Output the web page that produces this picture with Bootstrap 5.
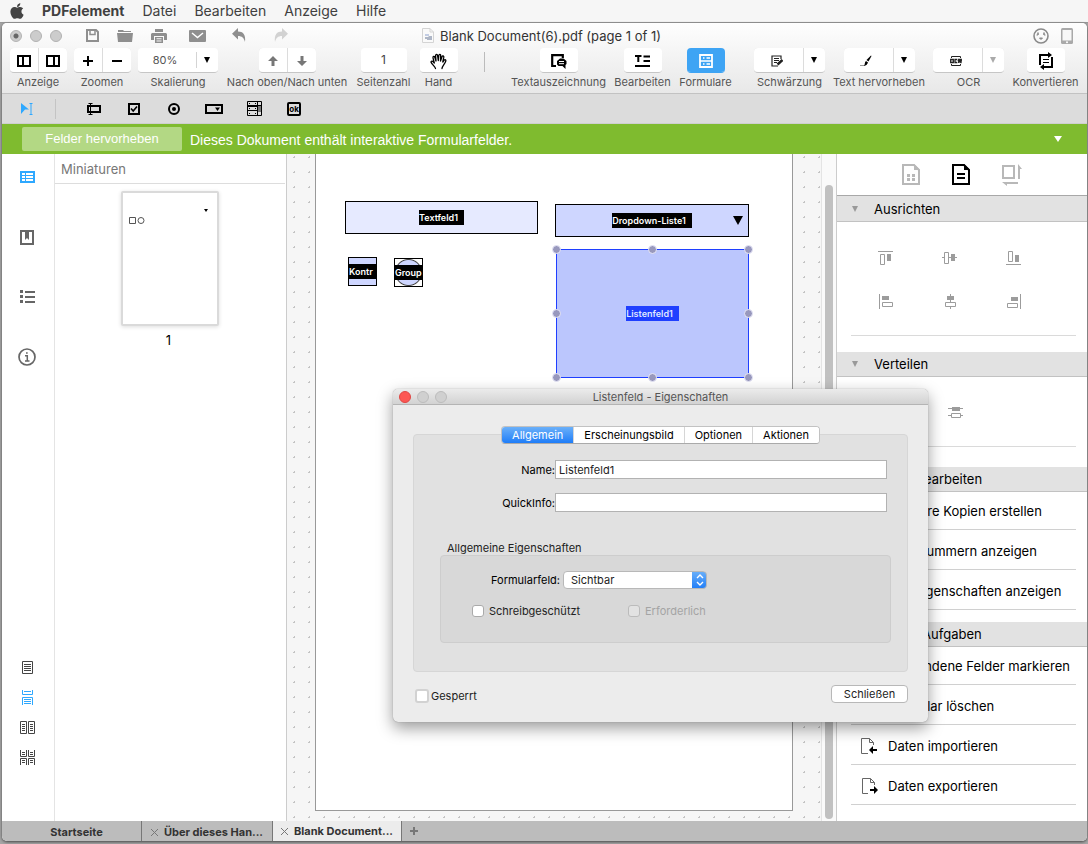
<!DOCTYPE html>
<html lang="de">
<head>
<meta charset="utf-8">
<meta name="viewport" content="width=device-width, initial-scale=1">
<title>PDFelement</title>
<link href="https://cdn.jsdelivr.net/npm/bootstrap@5.3.0/dist/css/bootstrap.min.css" rel="stylesheet">
<style>
  body { font-family: Inter, "Liberation Sans", sans-serif; font-size: 13px; line-height: 16px; color: #000; background: #a6a6a6; }
  svg { display: block; flex: none; }
  button { font: inherit; }
  .plain { background: none; border: 0; padding: 0; color: inherit; }

  /* system menu bar */
  .sysbar { height: 23px; background: #f6f6f6; border-bottom: 1px solid #999; color: #404040; font-size: 14px; padding: 0 10px; gap: 18px; }
  .sysbar a { color: inherit; text-decoration: none; }

  /* application window */
  .app-window { margin: 0 1px 3px 2px; border-radius: 5px; overflow: hidden; background: #fff; box-shadow: 0 1px 3px #444; }
  .app-head { background: linear-gradient(#fefefe, #e8e8e8); border-bottom: 1px solid #c2c2c2; height: 71px; }
  .title-row { display: grid; grid-template-columns: 1fr auto 1fr; height: 25px; padding: 0 14px 0 8px; }
  .light { width: 12px; height: 12px; border-radius: 50%; background: #ccc; border: 1px solid #b2b2b2; }
  .light-dot { background: radial-gradient(circle, #666 0 2px, #ccc 3px); }
  .quick { color: #8f8f8f; margin-left: 24px; gap: 18px; }
  .doc-title { color: #333; gap: 6px; }

  .tool-row { display: grid; grid-template-columns: 56px 56px 80px 122px 55px 39px 1fr 95px 57px 53px 6px 71px 92px 71px 67px; column-gap: 8px; padding: 0 8px; }
  .tool { display: flex; flex-direction: column; align-items: center; gap: 2px; white-space: nowrap; font-size: 11px; line-height: 14px; color: #555; }
  .tool-box { display: flex; height: 25px; gap: 1px; background: #dcdcdc; border-radius: 4px; overflow: hidden; border-bottom: 1px solid #c6c6c6; }
  .tool-box button { background: #fff; border: 0; padding: 2px 0 0; width: 28px; color: #000; display: flex; align-items: center; justify-content: center; }
  .tool-box .wide { width: 49px; padding-right: 4px; }
  .tool-box .drop { width: 21px; padding: 0 1px 0 0; }
  .tool-box .single { width: 38px; }
  .tool-box.on, .tool-box.on button { background: #3ea4f4; color: #fff; border-color: #3ea4f4; }
  .tool-box input { width: 46px; border: 0; text-align: center; background: #fff; color: #444; font-size: 12px; padding: 0; }
  .scale-pick { width: 80px; border: 0; appearance: none; color: #555; font-size: 11px; padding: 0 26px 0 0;
    background: #fff url("data:image/svg+xml,%3Csvg xmlns='http://www.w3.org/2000/svg' width='22' height='16'%3E%3Cpath d='M.5 0v16' stroke='%23d4d4d4'/%3E%3Cpath d='M8 5h6l-3 6z'/%3E%3C/svg%3E") no-repeat right center; }
  .rule-v { width: 1px; height: 20px; background: #bbb; }

  .form-tools { height: 30px; background: #dcdcdc; border-bottom: 1px solid #cfcfcf; padding-left: 5px; }
  .form-tools button { width: 40px; height: 28px; display: flex; align-items: center; justify-content: center; }
  .form-tools .rule-v { margin: 0 18px 0 8px; background: #c4c4c4; }

  .notice { height: 30px; background: #7fbb2f; color: #fff; font-family: "Liberation Sans", sans-serif; font-size: 14px; padding: 0 25px 0 20px; gap: 8px; }
  .notice .hilite { width: 160px; height: 24px; background: #b3d884; border-radius: 2px; color: #fff; font-size: 13px; }
  .notice span { padding-top: 2px; }

  /* navigation rail and thumbnails */
  .rail { flex: 0 0 53px; border-right: 1px solid #e4e4e4; padding: 0 2px 55px 0; color: #666; }
  .rail button { height: 60px; display: flex; align-items: center; justify-content: center; }
  .rail .view-modes { color: #444; }
  .rail .view-modes button { height: 30px; }
  .rail .cur { color: #2ea8ff; }
  .thumbs { flex: 0 0 232px; border-right: 1px solid #ccc; color: #000; padding-right: 1px; }
  .thumbs h2 { font-size: 13px; line-height: 16px; font-weight: 400; color: #777; margin: 0; padding: 7px 0 6px 6px; border-bottom: 1px solid #ddd; }
  .thumb-page { width: 98px; height: 135px; margin: 7px auto 6px; border: 2px solid #dadada; border-radius: 2px; background: #fff; box-shadow: 0 1px 4px #ddd; }
  .thumb-no { padding-right: 3px; text-align: center; }
  .thumb-page { position: relative; right: auto; }

  /* document canvas */
  .canvas { background: #f6f6f6 radial-gradient(circle, #c4c4c4 1px, transparent 1px) 0 -4px / 15px 15px; padding: 0 28px 10px; }
  .sheet { position: relative; background: #fff; border: 1px solid #999; border-top: 0; }
  .field { position: absolute; display: flex; align-items: center; justify-content: center; border: 1px solid #000; background: #ced6ff; font-size: 9px; line-height: 15px; font-weight: 600; color: #fff; height: 33px; }
  .field span { background: #000; padding-right: 6px; }
  .f-text { left: 29px; top: 47px; width: 193px; background: #e6eaff; }
  .f-drop { left: 239px; top: 50px; width: 194px; }
  .f-drop svg { position: absolute; right: 5px; top: 11px; }
  .f-check { left: 32px; top: 103px; width: 29px; height: 29px; }
  .f-radio { left: 78px; top: 104px; width: 29px; height: 29px; background: radial-gradient(circle, #ced6ff 0 12px, #444 13px, #fff 14px); }
  .f-check span, .f-radio span { flex: 1; padding: 0; height: 15px; }
  .f-list { left: 240px; top: 95px; width: 193px; height: 129px; background: #bbc6fd; border-color: #1f3fff; }
  .f-list span { background: #1f3fff; color: #dfe6ff; }
  .knob { position: absolute; width: 9px; height: 9px; margin: -5px; border-radius: 50%; background: #9898bd; border: 1px solid #e8e8f8; }
  .k-l { left: 0; } .k-c { left: 50%; } .k-r { left: 100%; margin-left: -4px; }
  .k-t { top: 0; } .k-m { top: 50%; } .k-b { top: 100%; margin-top: -4px; }
  .track { flex: 0 0 16px; background: #fafafa; border-left: 1px solid #e4e4e4; border-right: 1px solid #ccc; padding: 31px 3px 2px; }
  .track div { background: #c1c1c1; border-radius: 4px; }

  /* task panel */
  .side { flex: 0 0 250px; }
  .side-tabs { height: 42px; border-bottom: 1px solid #a8a8a8; gap: 32px; color: #b8b8b8; margin-bottom: 1px; }
  .side h3 { display: flex; align-items: center; gap: 16px; font-size: 13px; line-height: 16px; font-weight: 400; margin: 0; height: 25px; padding: 0 15px; background: #e2e2e2; border-bottom: 1px solid #c2c2c2; }
  .side-tabs + h3 { margin-top: -1px; padding-top: 1px; height: 26px; }
  .side-body { margin: 0 11px 16px 14px; border-bottom: 1px solid #dadada; color: #9c9c9c; }
  .align-grid { display: grid; grid-template-columns: repeat(3, 64px); grid-auto-rows: 44px; padding: 13px 0 12px 2px; }
  .align-grid button { display: flex; align-items: center; justify-content: center; }
  .tasks { list-style: none; margin: 0 11px 12px 14px; padding: 0; }
  .tasks li { border-bottom: 1px solid #d0d0d0; }
  .tasks button { display: flex; align-items: center; gap: 10px; width: 100%; height: 39px; padding: 3px 0 0 9px; white-space: nowrap; }
  .tasks li:first-child button { height: 37px; padding-top: 0; }
  .tasks svg { width: 18px; }

  /* document tabs */
  .doc-tabs { height: 20px; background: #bcbcbc; color: #333; font-size: 11px; font-weight: 700; }
  .doc-tabs a { color: inherit; text-decoration: none; border-right: 1px solid #777; display: flex; align-items: center; justify-content: center; gap: 6px; white-space: nowrap; padding-top: 2px; }
  .doc-tabs .t1 { width: 140px; padding-left: 10px; } .doc-tabs .t2 { width: 131px; } .doc-tabs .t3 { width: 129px; background: #ececec; padding-top: 0; }

  /* properties dialog */
  .dlg { position: absolute; left: 393px; top: 389px; width: 535px; background: #ececec; border-radius: 5px; box-shadow: 0 0 1px #777, 0 6px 16px rgba(0,0,0,.4); font-size: 11px; line-height: 14px; color: #222; }
  .dlg-title { height: 16px; border-bottom: 1px solid #b4b4b4; border-radius: 5px 5px 0 0; background: linear-gradient(#ebebeb, #d2d2d2); display: grid; grid-template-columns: 60px 1fr 60px; color: #555; padding: 0 6px; }
  .dlg-title .light { background: #d0d0d0; border-color: #bcbcbc; padding: 0; }
  .dlg-title .light-red { background: #fc5753; border-color: #df4744; }
  .dlg-body { padding: 29px 20px 19px; }
  .pane { border: 1px solid #d6d6d6; border-radius: 4px; background: #e1e1e1; padding: 0 16px 28px 26px; }
  .seg { margin: -9px 10px 16px 0; }
  .seg-in { display: flex; border: 1px solid #c2c2c2; border-bottom-color: #aaa; border-radius: 4px; overflow: hidden; background: #fff; }
  .seg-in button { border: 0; border-left: 1px solid #d6d6d6; background: #fff; height: 16px; padding: 0 10px; color: #000; line-height: 16px; }
  .seg-in button.on { background: linear-gradient(#6bb0f9, #1f7df8); color: #fff; border: 0; }
  .line-row { display: flex; align-items: center; }
  .line-row label { width: 115px; text-align: right; white-space: nowrap; color: #000; }
  .line-row input { flex: 1; min-width: 0; height: 19px; border: 1px solid #b2b2b2; background: #fff; padding: 0 3px; margin-right: 4px; color: #222; font-size: 11px; }
  .inner { border: 1px solid #cdcdcd; border-radius: 4px; background: #d8d8d8; padding: 15px 31px 25px; height: 88px; }
  .mac-pick { width: 144px; height: 18px; appearance: none; border: 1px solid #b8b8b8; border-radius: 4px; padding: 0 7px; color: #222; margin-left: 3px; font-size: 11px;
    background: #fff url("data:image/svg+xml,%3Csvg xmlns='http://www.w3.org/2000/svg' width='15' height='18'%3E%3Cdefs%3E%3ClinearGradient id='g' x2='0' y2='1'%3E%3Cstop stop-color='%236bb0f9'/%3E%3Cstop offset='1' stop-color='%231f7df8'/%3E%3C/linearGradient%3E%3C/defs%3E%3Cpath fill='url(%23g)' d='M0 0h15v18H0z'/%3E%3Cpath d='M5 7l3-3 3 3M5 11l3 3 3-3' fill='none' stroke='%23fff' stroke-width='1.4'/%3E%3C/svg%3E") no-repeat right center / 15px 18px border-box; }
  .tick { appearance: none; width: 12px; height: 12px; border: 1px solid #aaa; border-radius: 3px; background: #fff; margin: 0 5px 0 0; flex: none; }
  .tick:disabled { background: #e2e2e2; border-color: #bbb; }
  .tick-lg { width: 14px; height: 14px; border: 2px solid #d2d2d2; margin-right: 2px; }
  .push { width: 77px; height: 18px; border: 1px solid #b8b8b8; border-radius: 4px; background: #fff; color: #222; padding: 0; line-height: 14px; }
</style>
</head>
<body class="vh-100 d-flex flex-column overflow-hidden">

<nav class="sysbar d-flex align-items-center flex-shrink-0">
  <svg width="14" height="18" viewBox="0 0 384 512" fill="#444"><path d="M318.700 268.700c-.2-36.700 16.400-64.400 50-84.800-18.800-26.900-47.200-41.700-84.700-44.600-35.500-2.800-74.300 20.700-88.500 20.700-15 0-49.400-19.700-76.400-19.700C63.300 141.200 4 184.800 4 273.500q0 39.300 14.400 81.200c12.800 36.700 59 126.700 107.200 125.200 25.200-.6 43-17.900 75.800-17.900 31.800 0 48.300 17.900 76.400 17.900 48.600-.7 90.400-82.500 102.600-119.300-65.200-30.700-61.700-90-61.700-91.900zm-56.600-164.200c27.300-32.400 24.800-61.900 24-72.500-24.100 1.400-52 16.400-67.900 34.900-17.500 19.800-27.800 44.300-25.600 71.900 26.100 2 49.900-11.400 69.500-34.300z"/></svg>
  <a href="#" class="fw-bold">PDFelement</a>
  <a href="#">Datei</a>
  <a href="#">Bearbeiten</a>
  <a href="#">Anzeige</a>
  <a href="#">Hilfe</a>
</nav>

<div class="app-window d-flex flex-column flex-grow-1">
  <header class="app-head flex-shrink-0">
    <div class="title-row align-items-center">
      <div class="d-flex align-items-center">
        <div class="d-flex gap-2"><span class="light light-dot"></span><span class="light"></span><span class="light"></span></div>
        <div class="quick d-flex align-items-center">
          <button class="plain" aria-label="Speichern"><svg width="13" height="13" viewBox="0 0 13 13" fill="none" stroke="currentColor" stroke-width="2"><path d="M1 1h9l2 2v9H1z"/><path d="M4 1v4.500h5V1" stroke-width="1.500"/></svg></button>
          <button class="plain" aria-label="Öffnen"><svg width="16" height="13" viewBox="0 0 16 13" fill="currentColor"><path d="M1 3V1h5l1 1h7v1zM0 4h16l-1 9H1z"/></svg></button>
          <button class="plain" aria-label="Drucken"><svg width="16" height="14" viewBox="0 0 16 14" fill="currentColor"><path d="M4 0h8v3H4zM1 4h14l1 1v6h-3V7H3v4H0V5z"/><path d="M4 8h8v6H4z M5.500 9.300v1h5v-1z M5.500 11.600v1h5v-1z" fill-rule="evenodd"/></svg></button>
          <button class="plain ms-1" aria-label="E-Mail"><svg width="17" height="12" viewBox="0 0 17 12"><rect width="17" height="12" rx="1" fill="currentColor"/><path d="M3 3l5.500 4.500L14 3" fill="none" stroke="#fff" stroke-width="1.500"/></svg></button>
          <button class="plain ms-2" aria-label="Rückgängig"><svg width="15" height="15" viewBox="0 0 15 15" fill="currentColor"><path d="M6 0v3.500c5 0 8 3 7 10.500-1-4-3-6-7-6v3.500L0 5.800z"/></svg></button>
          <button class="plain ms-2" aria-label="Wiederholen"><svg width="15" height="15" viewBox="0 0 15 15" fill="#d2d2d2"><path d="M9 0v3.500c-5 0-8 3-7 10.500 1-4 3-6 7-6v3.500l6-5.700z"/></svg></button>
        </div>
      </div>
      <div class="doc-title d-flex align-items-center">
        <svg width="12" height="15" viewBox="0 0 12 15"><path d="M.5.500h7.500l3.500 3.500v10.500H.5z" fill="#fafafa" stroke="#d4d4d4"/><path d="M8 .5V4h3.500" fill="none" stroke="#d4d4d4"/><path d="M3 6h4v2H3z" fill="#c3cde4"/><path d="M3 9h3l1-1h3v4H5v-1H3z" fill="#aeb6c6"/></svg>
        <span>Blank Document(6).pdf (page 1 of 1)</span>
      </div>
      <div class="d-flex justify-content-end align-items-center" style="gap:12px">
        <button class="plain" aria-label="Feedback"><svg width="16" height="16" viewBox="0 0 16 16" fill="none" stroke="#8a8a8a"><circle cx="8" cy="8" r="7" stroke-width="1.600"/><path d="M5 4.500v2.500M11 4.500v2.500" stroke-width="1.600"/><path d="M3.500 7h1.500M11 7h1.500"/><path d="M6.500 10h3L8 11.500z" fill="#8a8a8a"/></svg></button>
        <button class="plain" aria-label="Mobilgerät"><svg width="12" height="16" viewBox="0 0 12 16"><rect width="12" height="16" rx="1.500" fill="#a9a9a9"/><path d="M1.500 2h9v10.500h-9z" fill="#f8f8f8"/><circle cx="6" cy="14.200" r="1" fill="#fff"/></svg></button>
      </div>
    </div>

    <div class="tool-row">
      <div class="tool">
        <div class="tool-box">
          <button aria-label="Linke Leiste"><svg width="14" height="12" viewBox="0 0 14 12" fill="none" stroke="currentColor" stroke-width="2"><path d="M1 1h12v10H1zM6 1v10"/></svg></button>
          <button aria-label="Rechte Leiste"><svg width="14" height="12" viewBox="0 0 14 12" fill="none" stroke="currentColor" stroke-width="2"><path d="M1 1h12v10H1zM8 1v10"/></svg></button>
        </div><span>Anzeige</span>
      </div>
      <div class="tool">
        <div class="tool-box">
          <button aria-label="Vergrößern"><svg width="10" height="10" stroke="currentColor" stroke-width="2"><path d="M5 0v10M0 5h10"/></svg></button>
          <button aria-label="Verkleinern"><svg width="10" height="10" stroke="currentColor" stroke-width="2"><path d="M0 5h10"/></svg></button>
        </div><span>Zoomen</span>
      </div>
      <div class="tool">
        <div class="tool-box"><select class="scale-pick text-center" id="scale" aria-label="Skalierung"><option>80%</option></select></div><label for="scale">Skalierung</label>
      </div>
      <div class="tool">
        <div class="tool-box">
          <button aria-label="Nach oben"><svg width="10" height="10" fill="#777"><path d="M5 0l5 5H6.500v5h-3V5H0z"/></svg></button>
          <button aria-label="Nach unten"><svg width="10" height="10" fill="#777"><path d="M5 10L0 5h3.500V0h3v5H10z"/></svg></button>
        </div><span>Nach oben/Nach unten</span>
      </div>
      <div class="tool">
        <div class="tool-box"><input id="pageno" value="1"></div><label for="pageno">Seitenzahl</label>
      </div>
      <div class="tool">
        <div class="tool-box"><button class="single" aria-label="Hand"><svg width="17" height="17" viewBox="0 0 17 17" fill="none" stroke="currentColor" stroke-width="1.300" stroke-linejoin="round" stroke-linecap="round"><path d="M5.500 15.500c0-1.500-4-4.500-4.500-6.500 0-1.200 1.500-1.300 2.300-.2L4.300 10 3 4.800c-.3-1.500 1.300-1.900 1.800-.5L6 8 5.600 2.800C5.500 1 7.400 1 7.600 2.600L8.300 7.500l.5-5c.2-1.500 2-1.400 1.900.2L10.500 8l1.500-4.300c.5-1.300 2-.8 1.800.5L12.800 9l1.400-1.800c.8-1 2-.3 1.600.9-.8 2.500-3.600 4.900-3.800 7.400"/></svg></button></div><span>Hand</span>
      </div>
      <div class="d-flex justify-content-center pt-1"><span class="rule-v"></span></div>
      <div class="tool">
        <div class="tool-box"><button class="single" aria-label="Textauszeichnung"><svg width="16" height="15" viewBox="0 0 16 15"><path d="M5 12H1.200V1.200h10.600V4" fill="none" stroke="currentColor" stroke-width="2.200"/><path d="M9 4.500h3.500l3 2.500v3l-1 1v4l-3-3H7.500L6 10.500V7z" fill="currentColor"/><path d="M8 7.500h5M8 9.700h5" stroke="#fff"/></svg></button></div><span>Textauszeichnung</span>
      </div>
      <div class="tool">
        <div class="tool-box"><button class="single" aria-label="Bearbeiten"><svg width="15" height="12" viewBox="0 0 15 12" stroke="currentColor" stroke-width="2"><path d="M0 1h6.500M3.300 1v6M8.500 1.500H15M8.500 6H15M0 11h15"/></svg></button></div><span>Bearbeiten</span>
      </div>
      <div class="tool">
        <div class="tool-box on"><button class="single" aria-label="Formulare"><svg width="14" height="14" viewBox="0 0 14 14" fill="none" stroke="currentColor"><path d="M1 1h12v12H1z" stroke-width="1.800"/><path d="M1 7h12M4 4h1.500M7.500 4h3.500M4 10h1.500M7.500 10h3.500" stroke-width="1.400"/></svg></button></div><span>Formulare</span>
      </div>
      <div></div>
      <div class="tool">
        <div class="tool-box">
          <button class="wide" aria-label="Schwärzung"><svg width="12" height="12" viewBox="0 0 12 12" fill="none" stroke="#222" stroke-width="1.200"><path d="M7 11H1V1h9v3M3 3.500h5M3 5.500h5M3 7.500h3"/><path d="M6.500 9.500l5-4.500" stroke-width="2.600"/></svg></button>
          <button class="drop" aria-label="Mehr"><svg width="6" height="6"><path d="M0 0h6L3 6z"/></svg></button>
        </div><span>Schwärzung</span>
      </div>
      <div class="tool">
        <div class="tool-box">
          <button class="wide" aria-label="Text hervorheben"><svg width="12" height="12" viewBox="0 0 12 12"><path d="M0 10.500h5" stroke="#999"/><path d="M11.500 1L8.500 6.500 6.500 5 11 .5z"/><path d="M6 6l2 1.500C7 10 6 10.500 4 11c1-1 .5-4 2-5z"/></svg></button>
          <button class="drop" aria-label="Mehr"><svg width="6" height="6"><path d="M0 0h6L3 6z"/></svg></button>
        </div><span>Text hervorheben</span>
      </div>
      <div class="tool">
        <div class="tool-box">
          <button class="wide" aria-label="OCR"><svg width="12" height="12" viewBox="0 0 12 12" fill="none" stroke="#222"><path d="M1.500 3V1.500h9V3M1.500 9v1.500h9V9"/><path d="M.7 4.500h2.600v3H.7zM7.300 4.500H5v3h2.300M8.700 8V4.500h2.600V6H9l2.500 2" stroke-width="1.300"/></svg></button>
          <button class="drop" aria-label="Mehr"><svg width="6" height="6" fill="#aaa"><path d="M0 0h6L3 6z"/></svg></button>
        </div><span>OCR</span>
      </div>
      <div class="tool">
        <div class="tool-box"><button class="single" aria-label="Konvertieren"><svg width="16" height="18" viewBox="0 0 16 18" fill="none" stroke="currentColor" stroke-width="2"><path d="M2 13V3h9M14 5v10H5"/><path d="M10 0l4 3-4 3zM6 12l-4 3 4 3z" fill="currentColor" stroke="none"/><path d="M5 7.500h6M5 10.500h6" stroke-width="1.200"/></svg></button></div><span>Konvertieren</span>
      </div>
    </div>
  </header>

  <div class="form-tools d-flex align-items-center flex-shrink-0">
    <button class="plain" aria-label="Auswahl"><svg width="12" height="12" viewBox="0 0 12 12"><path d="M0 0l8 6.500H4L0 11z" fill="#2ea8ff"/><path d="M8.500.500h3M8.500 11.500h3M10 .5v11" stroke="#2ea8ff"/></svg></button>
    <span class="rule-v"></span>
    <button class="plain" aria-label="Textfeld"><svg width="14" height="12" viewBox="0 0 14 12" fill="none" stroke="#000"><path d="M1 3h12v6H1z" stroke-width="2"/><path d="M1.500.500h4M1.500 11.500h4M3.500.500v11" stroke-width="1"/></svg></button>
    <button class="plain" aria-label="Kontrollkästchen"><svg width="12" height="12" viewBox="0 0 12 12" fill="none" stroke="#000"><path d="M1 1h10v10H1z" stroke-width="2"/><path d="M3 5.500l2.200 2.500L9 3.500" stroke-width="1.600"/></svg></button>
    <button class="plain" aria-label="Optionsfeld"><svg width="12" height="12" viewBox="0 0 12 12"><circle cx="6" cy="6" r="5" fill="none" stroke="#000" stroke-width="2"/><circle cx="6" cy="6" r="2"/></svg></button>
    <button class="plain" aria-label="Dropdown-Liste"><svg width="18" height="10" viewBox="0 0 18 10"><path d="M1 1h16v8H1z" fill="none" stroke="#000" stroke-width="2"/><path d="M10 3.500h5L12.500 7z"/></svg></button>
    <button class="plain" aria-label="Listenfeld"><svg width="15" height="15" viewBox="0 0 15 15" fill="none" stroke="#000"><path d="M.5.500h14v14H.5zM10.500 0v15M10 4.500h5M0 9.500h11"/><path d="M0 5h11" stroke-width="2"/><path d="M2 2.500h1M8 2.500h1M2 7.500h1M8 7.500h1M2 12.500h1M8 12.500h1"/><path d="M12.500 5v6" stroke="#777" stroke-width="3"/></svg></button>
    <button class="plain" aria-label="Schaltfläche"><svg width="14" height="14" viewBox="0 0 14 14"><rect x="1" y="1" width="12" height="12" rx="1" fill="none" stroke="#000" stroke-width="2"/><text x="7" y="10" text-anchor="middle" font-size="8" font-weight="700">ok</text></svg></button>
  </div>

  <div class="notice d-flex align-items-center flex-shrink-0">
    <button class="plain hilite">Felder hervorheben</button>
    <span>Dieses Dokument enthält interaktive Formularfelder.</span>
    <button class="plain ms-auto" aria-label="Einklappen"><svg width="8" height="6" fill="#fff"><path d="M0 0h8L4 6z"/></svg></button>
  </div>

  <main class="d-flex flex-grow-1" style="min-height:0">
    <nav class="rail d-flex flex-column justify-content-between">
      <div class="d-flex flex-column" style="margin-top:-7px">
        <button class="plain cur" aria-label="Miniaturen"><svg width="15" height="12" viewBox="0 0 15 12" fill="none" stroke="currentColor"><path d="M1 1h13v10H1z" stroke-width="2"/><path d="M1 4.500h13M1 7.500h13M5.500 1v10"/></svg></button>
        <button class="plain" aria-label="Lesezeichen"><svg width="14" height="15" viewBox="0 0 14 15"><path d="M1 1h12v13H1z" fill="none" stroke="currentColor" stroke-width="2"/><path d="M5 2h4v8L7 8l-2 2z" fill="currentColor"/></svg></button>
        <button class="plain" aria-label="Gliederung"><svg width="15" height="14" viewBox="0 0 15 14" stroke="currentColor" stroke-width="2"><path d="M5 2h10M5 7h10M5 12h10"/><path d="M0 1.500h3M0 6.500h3M0 11.500h3" stroke-width="3"/></svg></button>
        <button class="plain" aria-label="Info"><svg width="18" height="18" viewBox="0 0 18 18" fill="none" stroke="currentColor"><circle cx="9" cy="9" r="8" stroke-width="1.700"/><path d="M7 7.700h2.300V13M7 13h4.500M8 5h1.700" stroke-width="1.500"/></svg></button>
      </div>
      <div class="view-modes d-flex flex-column" style="margin-bottom:-6px">
        <button class="plain" aria-label="Einzelseite"><svg width="11" height="13" viewBox="0 0 11 13" fill="none" stroke="currentColor"><path d="M.5.500h10v12H.5zM2 3.500h7M2 5.500h7M2 7.500h7M2 9.500h7"/></svg></button>
        <button class="plain cur" aria-label="Fortlaufend"><svg width="11" height="15" viewBox="0 0 11 15" fill="none" stroke="currentColor"><path d="M.5 0v4.500h10V0M2 1.500h7M.5 15V7.500h10V15M2 9.500h7M2 11.500h7M2 13.500h7"/></svg></button>
        <button class="plain" aria-label="Doppelseite"><svg width="15" height="13" viewBox="0 0 15 13" fill="none" stroke="currentColor"><path d="M.5.500h6v12h-6zM8.500.500h6v12h-6zM2 3.500h3M2 5.500h3M2 7.500h3M2 9.500h3M10 3.500h3M10 5.500h3M10 7.500h3M10 9.500h3"/></svg></button>
        <button class="plain" aria-label="Doppelseite fortlaufend"><svg width="15" height="15" viewBox="0 0 15 15" fill="none" stroke="currentColor"><path d="M.5 0v6.500h6V0M8.500 0v6.500h6V0M.5 15V8.500h6V15M8.500 15V8.500h6V15M2 2.500h3M2 4.500h3M10 2.500h3M10 4.500h3M2 10.500h3M2 12.500h3M10 10.500h3M10 12.500h3"/></svg></button>
      </div>
    </nav>

    <aside class="thumbs">
      <h2>Miniaturen</h2>
      <div class="thumb-page"><svg width="94" height="131" fill="none" stroke="#555"><path d="M6.500 24.500h6v6h-6z"/><circle cx="18" cy="27.500" r="3"/><path d="M81 16h4l-2 3z" fill="#000" stroke="none"/></svg></div>
      <div class="thumb-no">1</div>
    </aside>

    <section class="canvas d-flex flex-grow-1">
      <div class="sheet flex-grow-1">
        <div class="field f-text"><span>Textfeld1</span></div>
        <div class="field f-drop"><span>Dropdown-Liste1</span><svg width="10" height="9"><path d="M0 0h10L5 9z"/></svg></div>
        <div class="field f-check"><span>Kontr</span></div>
        <div class="field f-radio"><span>Group</span></div>
        <div class="field f-list"><span>Listenfeld1</span>
          <i class="knob k-l k-t"></i><i class="knob k-c k-t"></i><i class="knob k-r k-t"></i>
          <i class="knob k-l k-m"></i><i class="knob k-r k-m"></i>
          <i class="knob k-l k-b"></i><i class="knob k-c k-b"></i><i class="knob k-r k-b"></i>
        </div>
      </div>
    </section>
    <div class="track d-flex"><div class="flex-grow-1"></div></div>

    <aside class="side">
      <div class="side-tabs d-flex align-items-center justify-content-center">
        <button class="plain" aria-label="Raster"><svg width="18" height="21" viewBox="0 0 18 21" fill="none" stroke="currentColor" stroke-width="2"><path d="M1 1h11l5 5v14H1z"/><path d="M12 0v6h6z" fill="currentColor" stroke="none"/><path d="M5 11.500h3M10 11.500h3M5 15.500h3M10 15.500h3" stroke-width="3"/></svg></button>
        <button class="plain text-black" aria-label="Eigenschaften"><svg width="18" height="21" viewBox="0 0 18 21" fill="none" stroke="currentColor" stroke-width="2"><path d="M1 1h11l5 5v14H1z"/><path d="M12 0v6h6z" fill="currentColor" stroke="none"/><path d="M5 10h8M5 14h8"/></svg></button>
        <button class="plain" aria-label="Größe"><svg width="20" height="22" viewBox="0 0 20 22" fill="none" stroke="currentColor" stroke-width="2"><path d="M1 2h11v12H1z"/><path d="M17 4v11M3 19h13"/><path d="M16 0l4 5h-4zM0 18h5v4z" fill="currentColor" stroke="none"/></svg></button>
      </div>
      <h3><svg width="6" height="6" fill="#999"><path d="M0 0h6L3 6z"/></svg>Ausrichten</h3>
      <div class="side-body align-grid">
        <button class="plain" aria-label="Oben"><svg width="15" height="15" fill="none" stroke="currentColor"><path d="M0 1.500h15M2.500 4.500h4v10h-4z"/><path d="M9 4h4v7H9z" fill="currentColor" stroke="none"/></svg></button>
        <button class="plain" aria-label="Mitte vertikal"><svg width="15" height="15" fill="none" stroke="currentColor"><path d="M0 7.500h3M7 7.500h8M2.500 2.500h4v11h-4z"/><path d="M9 4h4v7H9z" fill="currentColor" stroke="none"/></svg></button>
        <button class="plain" aria-label="Unten"><svg width="15" height="15" fill="none" stroke="currentColor"><path d="M0 14.500h15M2.500 1.500h4v10h-4z"/><path d="M9 5h4v7H9z" fill="currentColor" stroke="none"/></svg></button>
        <button class="plain" aria-label="Links"><svg width="15" height="15" fill="none" stroke="currentColor"><path d="M1.500 0v15M4.500 8.500h10v4h-10z"/><path d="M4 2h7v4H4z" fill="currentColor" stroke="none"/></svg></button>
        <button class="plain" aria-label="Mitte horizontal"><svg width="15" height="15" fill="none" stroke="currentColor"><path d="M8.500 0v8M8.500 12v3M3.500 8.500h10v4h-10z"/><path d="M5 2h7v4H5z" fill="currentColor" stroke="none"/></svg></button>
        <button class="plain" aria-label="Rechts"><svg width="15" height="15" fill="none" stroke="currentColor"><path d="M14.500 0v15M1.500 9.500h10v4h-10z"/><path d="M5 3h7v4H5z" fill="currentColor" stroke="none"/></svg></button>
      </div>
      <h3><svg width="6" height="6" fill="#999"><path d="M0 0h6L3 6z"/></svg>Verteilen</h3>
      <div class="side-body align-grid" style="margin-bottom:20px">
        <span></span>
        <button class="plain ps-2 ms-1" aria-label="Vertikal verteilen"><svg width="15" height="15" fill="none" stroke="currentColor"><path d="M0 3.500h15M0 10.500h3M12 10.500h3M3.500 8.500h9v4h-9z"/><path d="M4 2h8v4H4z" fill="currentColor" stroke="none"/></svg></button>
      </div>
      <h3><svg width="6" height="6" fill="#999"><path d="M0 0h6L3 6z"/></svg>Felder bearbeiten</h3>
      <ul class="tasks">
        <li><button class="plain"><svg height="16"></svg>Mehrere Kopien erstellen</button></li>
        <li><button class="plain"><svg height="16"></svg>Tab-Nummern anzeigen</button></li>
        <li><button class="plain"><svg height="16"></svg>Alle Eigenschaften anzeigen</button></li>
      </ul>
      <h3><svg width="6" height="6" fill="#999"><path d="M0 0h6L3 6z"/></svg>Andere Aufgaben</h3>
      <ul class="tasks">
        <li><button class="plain"><svg height="16"></svg>Vorhandene Felder markieren</button></li>
        <li><button class="plain"><svg height="16"></svg>Formular löschen</button></li>
        <li><button class="plain"><svg height="17" viewBox="0 0 18 17" fill="none" stroke="#666"><path d="M8 15.500H1.500V.5h8l4 4V7M9.500.500v4h4"/><path d="M9 12l4-4v3h4v2h-4v3z" fill="#000" stroke="none"/></svg>Daten importieren</button></li>
        <li><button class="plain"><svg height="17" viewBox="0 0 18 17" fill="none" stroke="#666"><path d="M8 15.500H2.500V.5h8l4 4V7M10.500.500v4h4"/><path d="M18 12l-4-4v3h-4v2h4v3z" fill="#000" stroke="none"/></svg>Daten exportieren</button></li>
      </ul>
    </aside>
  </main>

  <footer class="doc-tabs d-flex flex-shrink-0">
    <a href="#" class="t1">Startseite</a>
    <a href="#" class="t2"><svg width="7" height="7" stroke="#777"><path d="M0 0l7 7M7 0L0 7"/></svg>Über dieses Han...</a>
    <a href="#" class="t3"><svg width="7" height="7" stroke="#777"><path d="M0 0l7 7M7 0L0 7"/></svg>Blank Document...</a>
    <button class="plain ps-2" aria-label="Neuer Tab"><svg width="8" height="8" stroke="#777" stroke-width="2"><path d="M4 0v8M0 4h8"/></svg></button>
  </footer>
</div>

<div class="dlg" role="dialog" aria-label="Listenfeld - Eigenschaften">
  <div class="dlg-title align-items-center">
    <div class="d-flex" style="gap:6px"><button class="light light-red" aria-label="Schließen"></button><span class="light"></span><span class="light"></span></div>
    <div class="text-center">Listenfeld - Eigenschaften</div>
  </div>
  <form class="dlg-body">
    <div class="pane">
      <div class="seg d-flex justify-content-center"><div class="seg-in">
        <button type="button" class="on">Allgemein</button><button type="button">Erscheinungsbild</button><button type="button">Optionen</button><button type="button">Aktionen</button>
      </div></div>
      <div class="line-row"><label for="fname">Name:</label><input id="fname" value="Listenfeld1"></div>
      <div class="line-row" style="margin-top:14px"><label for="finfo">QuickInfo:</label><input id="finfo"></div>
      <div style="margin-top:29px;padding-left:7px">Allgemeine Eigenschaften</div>
      <div class="inner">
        <div class="d-flex align-items-center" style="padding-left:19px"><label for="fvis" class="text-black">Formularfeld:</label><select id="fvis" class="mac-pick"><option>Sichtbar</option></select></div>
        <div class="d-flex" style="margin-top:15px">
          <label class="d-flex align-items-center" style="width:156px"><input type="checkbox" class="tick">Schreibgeschützt</label>
          <label class="d-flex align-items-center" style="color:#a4a4a4"><input type="checkbox" class="tick" disabled>Erforderlich</label>
        </div>
      </div>
    </div>
    <div class="d-flex justify-content-between" style="margin-top:13px;padding-left:2px">
      <label class="d-flex align-items-center pt-1"><input type="checkbox" class="tick tick-lg">Gesperrt</label>
      <button type="button" class="push">Schließen</button>
    </div>
  </form>
</div>

<script src="https://cdn.jsdelivr.net/npm/bootstrap@5.3.0/dist/js/bootstrap.bundle.min.js"></script>
</body>
</html>
